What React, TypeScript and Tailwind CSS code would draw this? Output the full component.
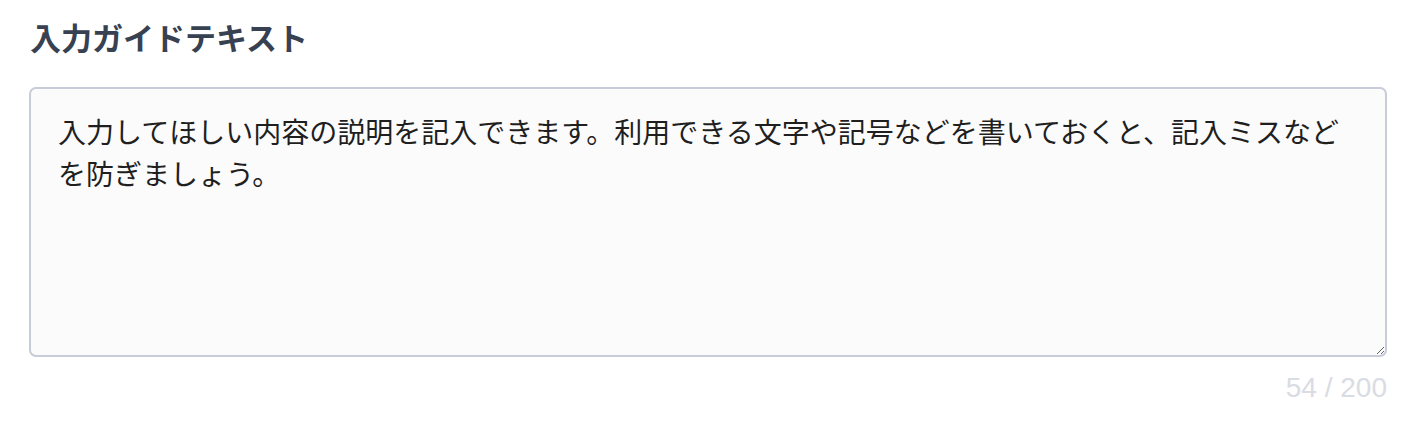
export default function App() {
  return (
    <div
      className="w-[1420px] h-[434px] bg-white pt-[19px] pl-[29px] pr-[33px]"
      style={{ fontFamily: '"Liberation Sans", "Noto Sans CJK JP", sans-serif' }}
    >
      <h2 className="text-[31px] leading-[42px] font-bold text-[#374151] pl-[1px]">
        入力ガイドテキスト
      </h2>
      <textarea
        className="mt-[26px] block w-full h-[270px] rounded-[7px] border-2 border-[#c8ccd8] bg-[#fbfbfc] pt-6 px-[27px] text-[28px] leading-[42px] text-[#1f1f1f] outline-none"
        style={{ fontFamily: '"Liberation Sans", "Noto Sans CJK JP", sans-serif' }}
        defaultValue="入力してほしい内容の説明を記入できます。利用できる文字や記号などを書いておくと、記入ミスなどを防ぎましょう。"
      />
      <div className="mt-4 text-right text-[28px] leading-[30px] text-[#d9dce3]">54 / 200</div>
    </div>
  );
}
